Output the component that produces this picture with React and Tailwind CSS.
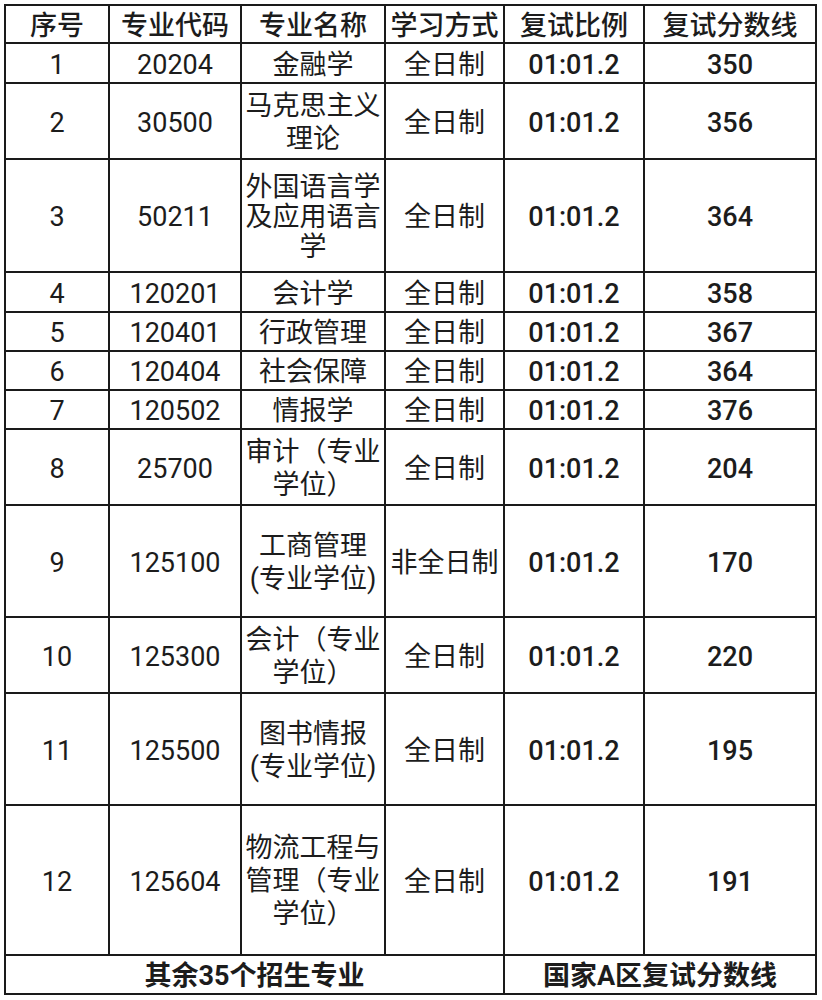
import React from 'react';

const rows = [
  { no: '1', code: '20204', name: ['金融学'], mode: '全日制', score: '350', h: 'h-[40px]' },
  { no: '2', code: '30500', name: ['马克思主义', '理论'], mode: '全日制', score: '356', h: 'h-[76px]' },
  { no: '3', code: '50211', name: ['外国语言学', '及应用语言', '学'], mode: '全日制', score: '364', h: 'h-[113px]', tight: true },
  { no: '4', code: '120201', name: ['会计学'], mode: '全日制', score: '358', h: 'h-[40px]' },
  { no: '5', code: '120401', name: ['行政管理'], mode: '全日制', score: '367', h: 'h-[39px]' },
  { no: '6', code: '120404', name: ['社会保障'], mode: '全日制', score: '364', h: 'h-[39px]' },
  { no: '7', code: '120502', name: ['情报学'], mode: '全日制', score: '376', h: 'h-[39px]' },
  { no: '8', code: '25700', name: ['审计（专业', '学位）'], mode: '全日制', score: '204', h: 'h-[76px]' },
  { no: '9', code: '125100', name: ['工商管理', '(专业学位)'], mode: '非全日制', score: '170', h: 'h-[112px]' },
  { no: '10', code: '125300', name: ['会计（专业', '学位）'], mode: '全日制', score: '220', h: 'h-[76px]' },
  { no: '11', code: '125500', name: ['图书情报', '(专业学位)'], mode: '全日制', score: '195', h: 'h-[112px]' },
  { no: '12', code: '125604', name: ['物流工程与', '管理（专业', '学位）'], mode: '全日制', score: '191', h: 'h-[150px]' },
];

const cell = 'border-2 border-[#1a1a1a] text-center align-middle px-0 pt-[3px] pb-0';

export default function App() {
  return (
    <div
      className="w-[822px] h-[1000px] bg-white text-[#1c1c1c] pt-[4px] pl-[4px]"
      style={{ fontFamily: 'Roboto, "Noto Sans CJK SC", sans-serif' }}
    >
      <table className="table-fixed border-collapse w-[813px] text-[27px] leading-[30px]">
        <colgroup>
          <col className="w-[104px]" />
          <col className="w-[132px]" />
          <col className="w-[144px]" />
          <col className="w-[119px]" />
          <col className="w-[140px]" />
          <col className="w-[172px]" />
        </colgroup>
        <thead>
          <tr className="h-[38px]">
            <th className={`${cell} font-medium`}>序号</th>
            <th className={`${cell} font-medium`}>专业代码</th>
            <th className={`${cell} font-medium`}>专业名称</th>
            <th className={`${cell} font-medium whitespace-nowrap`}>学习方式</th>
            <th className={`${cell} font-medium`}>复试比例</th>
            <th className={`${cell} font-medium`}>复试分数线</th>
          </tr>
        </thead>
        <tbody>
          {rows.map((r) => (
            <tr key={r.no} className={r.h}>
              <td className={cell}>{r.no}</td>
              <td className={cell}>{r.code}</td>
              <td className={`${cell} whitespace-nowrap ${r.tight || r.name.length === 1 ? 'leading-[30px]' : 'leading-[33px]'}`}>
                {r.name.map((line, i) => (
                  <div key={i}>{line}</div>
                ))}
              </td>
              <td className={`${cell} whitespace-nowrap`}>{r.mode}</td>
              <td className={`${cell} font-medium`}>01:01.2</td>
              <td className={`${cell} font-medium`}>{r.score}</td>
            </tr>
          ))}
          <tr className="h-[39px] font-bold">
            <td colSpan={4} className={cell}>其余35个招生专业</td>
            <td colSpan={2} className={cell}>国家A区复试分数线</td>
          </tr>
        </tbody>
      </table>
    </div>
  );
}
